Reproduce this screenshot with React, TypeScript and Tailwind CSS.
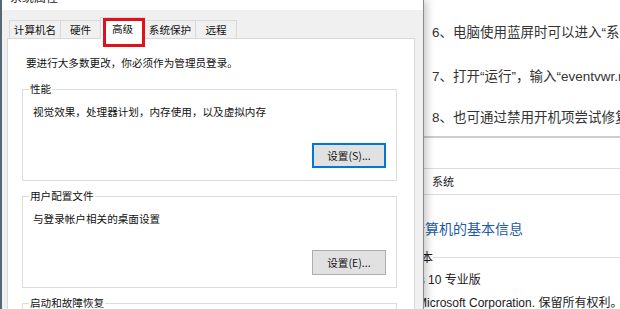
import React from 'react';

const cjk = { fontFamily: '"Noto Sans CJK SC", "Noto Sans", sans-serif' };
const web = { fontFamily: '"Liberation Sans", "Noto Sans CJK SC", sans-serif' };

const tabs = [
  { label: '计算机名', w: 'w-[52px]' },
  { label: '硬件', w: 'w-[41px]' },
  { label: '高级', w: 'w-[45px]', active: true },
  { label: '系统保护', w: 'w-[52px]' },
  { label: '远程', w: 'w-[42px]' },
];

function GroupBox({ title, text, button, focused }: { title: string; text: string; button?: string; focused?: boolean }) {
  return (
    <fieldset className="ml-[14px] mt-[7px] w-[375px] shrink-0 border border-[#dcdcdc] pb-[12px]">
      <legend className="ml-[6px] px-[1px] text-[10.6px] leading-[16px] text-[#111]">{title}</legend>
      <p className="mt-[7px] pl-[10px] text-[10.6px] leading-[16px] text-[#111]">{text}</p>
      {button && (
        <div className="mt-[23px] flex justify-end pr-[10px]">
          <button
            className={
              focused
                ? 'h-[25px] w-[74px] border-2 border-[#0078d7] bg-[#e1e1e1] text-[10.6px] text-[#111]'
                : 'h-[25px] w-[74px] border border-[#adadad] bg-[#e1e1e1] text-[10.6px] text-[#111]'
            }
          >
            {button}
          </button>
        </div>
      )}
    </fieldset>
  );
}

export default function App() {
  return (
    <div className="flex h-[309px] w-[620px] overflow-hidden bg-white" style={cjk}>
      {/* 系统属性 dialog */}
      <div className="relative z-10 flex w-[424px] shrink-0 flex-col border-l-2 border-r border-l-[#566873] border-r-[#8c8c8c] bg-[#f0f0f0] shadow-[3px_0_8px_rgba(0,0,0,0.22)]">
        <div className="h-[10px] shrink-0 overflow-hidden bg-white">
          <div className="-mt-[11px] ml-[8px] text-[12px] leading-[16px] text-[#222]">系统属性</div>
        </div>

        <div className="flex h-[28px] shrink-0 items-end pl-[7px]">
          {tabs.map((t) =>
            t.active ? (
              <div
                key={t.label}
                className={`relative z-10 -mb-px -ml-px flex h-[22px] ${t.w} items-center justify-center border border-b-0 border-[#d9d9d9] bg-white text-[10.6px] text-[#111]`}
              >
                {t.label}
                <div className="absolute left-[2px] top-0 h-[29px] w-[42px] border-[3px] border-[#e3101b]" />
              </div>
            ) : (
              <div
                key={t.label}
                className={`-ml-px flex h-[18px] ${t.w} items-center justify-center border border-b-0 border-[#d9d9d9] bg-[#f0f0f0] text-[10.6px] text-[#111] first:ml-0`}
              >
                {t.label}
              </div>
            )
          )}
        </div>

        <div className="ml-[5px] flex min-h-0 w-[408px] flex-1 flex-col overflow-hidden border border-b-0 border-[#d9d9d9] bg-white">
          <p className="shrink-0 pl-[18px] pt-[16px] text-[10.6px] leading-[16px] text-[#111]">
            要进行大多数更改，你必须作为管理员登录。
          </p>
          <div className="h-[3px] shrink-0" />
          <GroupBox title="性能" text="视觉效果，处理器计划，内存使用，以及虚拟内存" button="设置(S)..." focused />
          <GroupBox title="用户配置文件" text="与登录帐户相关的桌面设置" button="设置(E)..." />
          <GroupBox title="启动和故障恢复" text="系统启动、系统故障和调试信息" button="设置(T)..." />
        </div>
      </div>

      {/* background: article + control panel window */}
      <div className="flex min-w-0 flex-1 flex-col overflow-hidden whitespace-nowrap">
        <div
          className="h-[138px] shrink-0 border-b-2 border-[#cdcdcd] bg-white pl-[8px] pt-[23px] text-[13.5px] leading-[20px] text-[#333]"
          style={web}
        >
          <p>6、电脑使用蓝屏时可以进入“系统配置”</p>
          <p className="mt-[24px]">7、打开“运行”，输入“eventvwr.msc”</p>
          <p className="mt-[21px]">8、也可通过禁用开机项尝试修复</p>
        </div>

        <div className="h-[31px] shrink-0 border-b border-[#dcdcdc] bg-white" />
        <div className="flex h-[26px] shrink-0 items-center border-b border-[#dcdcdc] pl-[8px] text-[11px] text-[#1a1a1a]">
          系统
        </div>

        <div className="-ml-[13px] mt-[23px] shrink-0 text-[14px] leading-[20px] text-[#1e5aa8]">计算机的基本信息</div>

        <div className="mt-[11px] flex shrink-0 items-center text-[12px] leading-[16px] text-[#1a1a1a]">
          <span className="-ml-[15px]">版本</span>
          <div className="h-px flex-1 bg-[#dcdcdc]" />
        </div>

        <div className="-ml-[48px] mt-[7px] shrink-0 text-[12px] leading-[16px] text-[#1a1a1a]" style={web}>
          Windows 10 专业版
        </div>
        <div className="-ml-[7px] mt-[7px] shrink-0 text-[12px] leading-[16px] text-[#1a1a1a]" style={web}>
          Microsoft Corporation. 保留所有权利。
        </div>
      </div>
    </div>
  );
}
